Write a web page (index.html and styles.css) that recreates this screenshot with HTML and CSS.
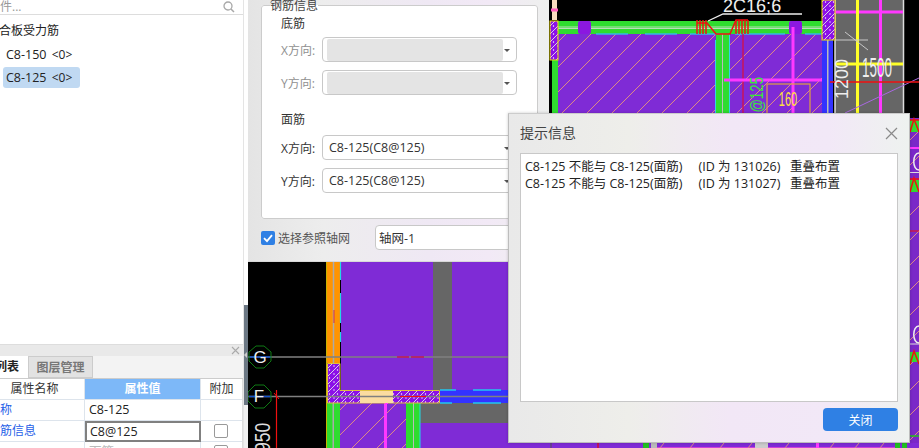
FILE: index.html
```html
<!DOCTYPE html>
<html lang="zh">
<head>
<meta charset="utf-8">
<title>钢筋布置</title>
<link rel="stylesheet" href="styles.css">
</head>
<body>
<div class="app">
  <aside class="side">
    <div class="side-top">
      <div class="search">
        <span class="search-text">件...</span>
        <svg class="search-icon" width="12" height="12" viewBox="0 0 12 12"><circle cx="5" cy="5" r="4" fill="none" stroke="#a8a8a8" stroke-width="1.3"/><path d="M8 8l3 3" stroke="#a8a8a8" stroke-width="1.5"/></svg>
      </div>
      <ul class="tree">
        <li class="tree-root">合板受力筋</li>
        <li class="tree-item">C8-150 <small>&lt;0&gt;</small></li>
        <li class="tree-item selected">C8-125 <small>&lt;0&gt;</small></li>
      </ul>
    </div>
    <div class="side-bottom">
      <div class="dock-head"><svg width="9" height="9" viewBox="0 0 9 9"><path d="M1 1l7 7M8 1l-7 7" stroke="#aaa" stroke-width="1.1"/></svg></div>
      <div class="tabs">
        <span class="tab active">列表</span>
        <span class="tab">图层管理</span>
      </div>
      <div class="grid">
        <div class="cell head first">属性名称</div>
        <div class="cell head hl">属性值</div>
        <div class="cell head">附加</div>
        <div class="cell link">称</div>
        <div class="cell val">C8-125</div>
        <div class="cell"></div>
        <div class="cell link">筋信息</div>
        <div class="cell val editing">C8@125</div>
        <div class="cell check-cell"><span class="box"></span></div>
        <div class="cell link"></div>
        <div class="cell val faded">面筋</div>
        <div class="cell check-cell"><span class="box"></span></div>
      </div>
    </div>
  </aside>
  <div class="sash"></div>
  <main class="cad">
    <svg class="drawing" width="671" height="448" viewBox="248 0 671 448" font-family="'Liberation Sans',sans-serif">
      <defs>
        <pattern id="hatch" width="25" height="25" patternUnits="userSpaceOnUse"><path d="M-3 28L28 -3" stroke="#dd8a86" stroke-width="1"/><path d="M-3 3L3 -3M22 28L28 22" stroke="#dd8a86" stroke-width="1"/></pattern>
        <pattern id="col" width="8" height="8" patternUnits="userSpaceOnUse"><rect width="8" height="8" fill="#8b0fe8"/><path d="M-1 9L9 -1" stroke="#d9d0e8" stroke-width="1"/><circle cx="1.500" cy="2" r=".7" fill="#fff"/><circle cx="6" cy="6" r=".7" fill="#fff"/></pattern>
      </defs>
      <rect x="248" width="671" height="448" fill="#000"/>

      <!-- upper plan -->
      <rect x="552" y="21" width="270" height="92" fill="#7f2bd6"/>
      <rect x="552" y="21" width="270" height="92" fill="url(#hatch)"/>
      <rect x="552" y="60" width="6" height="60" fill="#2fdc2f"/>
      <rect x="557" y="21" width="265" height="13" fill="#2fdc2f"/>
      <path d="M596 34h32M645 34h32M690 34h30M735 34h50M805 34h17" stroke="#35b8e8" stroke-width="1.5"/>
      <path d="M557 27h265M557 28.500h265" stroke="#ddd" stroke-width=".8"/>
      <rect x="578" y="21" width="13" height="13" rx="2" fill="#8b18e0"/>
      <rect x="789" y="21" width="13" height="13" rx="2" fill="#8b18e0"/>
      <rect x="716" y="34" width="6" height="79" fill="#2fdc2f"/>
      <rect x="722" y="34" width="1" height="79" fill="#bbb"/>
      <rect x="723" y="34" width="6" height="79" fill="#2fdc2f"/>
      <rect x="729" y="34" width="1" height="79" fill="#36d0e8"/>
      <rect x="715" y="40" width="1" height="73" fill="#36d0e8"/>
      <path d="M743 34v79" stroke="#c8145a" stroke-width="1.500"/>
      <path d="M793 27v86" stroke="#ff38ff" stroke-width="3"/>
      <path d="M724 80h103" stroke="#ff38ff" stroke-width="3"/>
      <rect x="767" y="84" width="43" height="32" fill="none" stroke="#e0a040" stroke-width="1.200"/>
      <text x="0" y="0" font-size="20" fill="#ffe040" text-anchor="middle" transform="translate(788 106) scale(.55 1)">160</text>
      <text x="0" y="0" font-size="19" fill="#38e838" transform="translate(763 120) rotate(-90) scale(.7 1)">8@125</text>

      <rect x="822" y="40" width="11" height="73" fill="#3333ff"/>
      <rect x="827" y="40" width="1.500" height="73" fill="#bbb"/>
      <rect x="835" width="68" height="113" fill="#666"/>
      <path d="M835 0v113M903.500 0v113" stroke="#ddd" stroke-width="1.500"/>
      <path d="M835 12h68" stroke="#ff38ff" stroke-width="3"/>
      <path d="M857.500 0v113" stroke="#ffff28" stroke-width="3"/>
      <path d="M880.500 0v113" stroke="#ff38ff" stroke-width="3"/>
      <path d="M835 64h68" stroke="#ffff28" stroke-width="3"/>
      <rect x="822" y="0" width="13" height="40" fill="url(#col)" stroke="#f0e000"/>
      <path d="M845 113L919 78" stroke="#a868e0" stroke-width="1"/>
      <path d="M845 32L868 50M835 40h33" stroke="#c8c8c8" stroke-width="1"/>
      <path d="M830 82h89" stroke="#f01010" stroke-width="1.300"/>
      <text x="0" y="0" font-size="28" fill="#eee" transform="translate(862 77) scale(.48 1)">1500</text>
      <text x="0" y="0" font-size="18" fill="#eee" transform="translate(848 99) rotate(-90)">1200</text>

      <rect x="550" y="21" width="8" height="39" fill="url(#col)" stroke="#f0e000"/>
      <rect x="552" y="0" width="5" height="20" fill="#f8dcc0"/>
      <path d="M551 10h7" stroke="#ff60c0" stroke-width="3"/>

      <path d="M697 20v14M700 20v14M703 20v14M706 20v14M736 20v14M739 20v14M742 20v14M745 20v14M748 20v14" stroke="#f01010" stroke-width="1.500"/>
      <path d="M697 23h10l9 11h14l6-14h12" fill="none" stroke="#f01010" stroke-width="1.500"/>
      <path d="M708 21L723 14H802" fill="none" stroke="#eee" stroke-width="1.300"/>
      <text x="0" y="0" font-size="19" fill="#eee" transform="translate(723 12) scale(.95 1)">2C16;6</text>

      <!-- right strip -->
      <rect x="905" y="113" width="14" height="335" fill="#7a28c8"/>
      <rect x="905" y="113" width="14" height="335" fill="url(#hatch)"/>
      <rect x="905" y="113" width="14" height="5" fill="#000"/>
      <rect x="905" y="120" width="14" height="12" fill="#2fdc2f"/>
      <path d="M910 132L914 119L919 132M905 120h14" fill="none" stroke="#f01010" stroke-width="1.500"/>
      <path d="M905 148h14" stroke="#ff38ff" stroke-width="2"/>
      <path d="M919 153C912 153 912 170 919 170" fill="none" stroke="#eee" stroke-width="1.500"/>
      <path d="M905 172.500h14" stroke="#ddd"/>
      <rect x="905" y="180" width="14" height="12" fill="#2fdc2f"/>
      <path d="M910 192L914 178L919 192M905 179h14" fill="none" stroke="#f01010" stroke-width="1.500"/>
      <path d="M905 231h14" stroke="#f01010"/>
      <path d="M919 326C912 326 912 343 919 343" fill="none" stroke="#eee" stroke-width="1.500"/>
      <path d="M905 344h14" stroke="#ddd"/>
      <rect x="905" y="352" width="14" height="10" fill="#2fdc2f"/>
      <path d="M910 364L914 351L919 364" fill="none" stroke="#f01010" stroke-width="1.500"/>
      <path d="M905 436h14" stroke="#20c020"/>

      <!-- lower plan -->
      <rect x="341" y="262" width="169" height="128" fill="#7f2bd6"/>
      <rect x="433" y="262" width="19" height="128" fill="#666"/>
      <rect x="327" y="262" width="13" height="101" fill="#ff9400"/>
      <path d="M326.500 262v186" stroke="#c8b400" stroke-width="1"/>
      <path d="M333.500 262v186" stroke="#aaa" stroke-width="1.500"/>
      <path d="M340.500 262v18M340.500 293v30M340.500 332v10" stroke="#22d8e8" stroke-width="1.200"/>
      <path d="M334 310v13" stroke="#e03030" stroke-width="1"/>
      <rect x="420" y="403" width="90" height="20" fill="#666"/>
      <rect x="420" y="423" width="90" height="25" fill="#7f2bd6"/>
      <rect x="440" y="390" width="70" height="13" fill="#3333ff"/>
      <path d="M440 390h16M473 390h28M473 403h28M440 403h12" stroke="#22c8f0" stroke-width="1.500"/>
      <rect x="340" y="403" width="66" height="45" fill="#7f2bd6"/>
      <rect x="340" y="403" width="66" height="45" fill="url(#hatch)"/>
      <rect x="384" y="403" width="3" height="45" fill="#ff38ff"/>
      <rect x="327" y="403" width="13" height="45" fill="#2fdc2f"/>
      <rect x="332.500" y="403" width="1.500" height="45" fill="#aaa"/>
      <rect x="406" y="403" width="14" height="45" fill="#2fdc2f"/>
      <rect x="413" y="403" width="1" height="45" fill="#bbb"/>
      <rect x="419.500" y="403" width="1" height="45" fill="#22d8e8"/>
      <path d="M327.500 363.500h12.500V390.500H439.500V403H327.500Z" fill="url(#col)" stroke="#e0c040"/>
      <rect x="360" y="391" width="33" height="12" fill="#fbdca0"/>
      <rect x="385" y="403" width="3" height="1" fill="#ff38ff"/>
      <path d="M248 357h262M248 396.500h262" stroke="#808080" stroke-width="1.300"/>
      <path d="M397 357h12M411 357h13" stroke="#c0145a" stroke-width="1.500"/>
      <path d="M400 396.500h22M414 396.500h12" stroke="#f01010" stroke-width="1.200"/>
      <path d="M276.500 390v58" stroke="#f01010" stroke-width="1.200"/>
      <path d="M274 393l5 6" stroke="#f01010" stroke-width="1"/>
      <path d="M249 357h22M249 396.500h22" stroke="#1050c8" stroke-width="1.300"/>
      <polygon points="256,346 264,346 271,352 271,361 264,368 256,368 249,361 249,352" fill="none" stroke="#0f7a14" stroke-width="1"/>
      <polygon points="255,385 264,385 271,392 271,401 264,408 255,408 248,401 248,392" fill="none" stroke="#0f7a14" stroke-width="1"/>
      <text x="260" y="363" font-size="17" fill="#eee" text-anchor="middle">G</text>
      <text x="259" y="402" font-size="17" fill="#eee" text-anchor="middle">F</text>
      <text x="0" y="0" font-size="22" fill="#ddd" transform="translate(270 452) rotate(-90) scale(.8 1)">950</text>

      <!-- bottom strip -->
      <rect x="510" y="443" width="409" height="5" fill="#7f2bd6"/>
      <rect x="500" y="436" width="10" height="12" fill="#7f2bd6"/>
      <rect x="643" y="443" width="6" height="5" fill="#20c020"/>
      <rect x="651" y="443" width="6" height="5" fill="#bbb"/>
      <path d="M657 447.500H895" stroke="#d040d8" stroke-width="1.200"/>
      <path d="M660 448l4-5M690 448l4-5M720 448l4-5M748 448l4-5M785 448l4-5M830 448l4-5M855 448l4-5M880 448l4-5" stroke="#dd8a86"/>
      <rect x="755" y="443" width="13" height="5" fill="#ccc"/>
      <rect x="816" y="443" width="3" height="5" fill="#ff38ff"/>
      <rect x="895" y="443" width="5" height="5" fill="#20c020"/>
      <rect x="902" y="443" width="5" height="5" fill="#20c020"/>
      <path d="M598 443v5" stroke="#c0145a" stroke-width="2"/>
      <path d="M551 443v5" stroke="#555"/>
      <path d="M908 436h11" stroke="#20c020"/>
    </svg>

    <section class="win rebar">
      <fieldset class="group">
        <legend class="legend">钢筋信息</legend>
        <h3 class="sub">底筋</h3>
        <div class="row"><label class="lbl off">X方向:</label><div class="combo"><span class="blank"></span><i class="arrow"></i></div></div>
        <div class="row"><label class="lbl off">Y方向:</label><div class="combo"><span class="blank"></span><i class="arrow"></i></div></div>
        <h3 class="sub second">面筋</h3>
        <div class="row"><label class="lbl">X方向:</label><div class="combo"><span class="value">C8-125(C8@125)</span><i class="arrow"></i></div></div>
        <div class="row"><label class="lbl">Y方向:</label><div class="combo"><span class="value">C8-125(C8@125)</span><i class="arrow"></i></div></div>
      </fieldset>
      <div class="foot">
        <label class="check"><span class="tick"><svg width="14" height="14" viewBox="0 0 14 14"><path d="M3 7.200l3 3 5-6" fill="none" stroke="#fff" stroke-width="1.800"/></svg></span>选择参照轴网</label>
        <div class="combo axis"><span class="value">轴网-1</span></div>
      </div>
    </section>

    <section class="win notice">
      <header class="notice-head">
        <h2 class="notice-title">提示信息</h2>
        <svg width="13" height="13" viewBox="0 0 13 13"><path d="M1 1l11 11M12 1L1 12" stroke="#8a8a8a" stroke-width="1.200"/></svg>
      </header>
      <div class="log">
        <p>C8-125 不能与 C8-125(面筋)&nbsp;&nbsp;&nbsp;&nbsp;&nbsp;(ID 为 131026)&nbsp;&nbsp;&nbsp;重叠布置</p>
        <p>C8-125 不能与 C8-125(面筋)&nbsp;&nbsp;&nbsp;&nbsp;&nbsp;(ID 为 131027)&nbsp;&nbsp;&nbsp;重叠布置</p>
      </div>
      <footer class="notice-foot"><button class="btn" type="button">关闭</button></footer>
    </section>
  </main>
</div>
</body>
</html>
```
FILE: styles.css
```css
* { box-sizing: border-box; }
html, body { margin: 0; padding: 0; }
body {
  width: 919px; height: 448px; overflow: hidden;
  font-family: "Open Sans", "Noto Sans CJK SC", sans-serif;
  font-size: 12.5px; color: #222;
}
.app { display: flex; width: 919px; height: 448px; }

/* left column */
.side {
  width: 244px; height: 448px; flex: none; background: #fff;
  display: flex; flex-direction: column; justify-content: space-between;
  overflow: hidden; border-right: 1px solid #e4e4e4;
}
.search {
  height: 15px; border-bottom: 1px solid #ddd;
  display: flex; justify-content: space-between; align-items: center; padding-right: 8px;
}
.search-text { color: #999; margin-top: -3px; font-size: 12px; }
.search-icon { margin-top: -1px; }
.tree { list-style: none; margin: 0; padding: 0; }
.tree-root { height: 20px; line-height: 20px; margin: 6px 0 0 -1px; font-size: 12px; }
.tree-item { height: 21px; line-height: 21px; margin: 2px 0 0 3px; width: 77px; padding-left: 3px; border-radius: 3px; }
.tree-root + .tree-item { margin-top: 3px; }
.tree-item small { font-size: 12px; margin-left: 2px; }
.selected { background: #c0d9f2; }

.dock-head {
  height: 12px; background: #e9e9e9; border-top: 1px solid #ddd;
  display: flex; justify-content: flex-end; align-items: center; padding-right: 3px;
}
.tabs { display: flex; height: 23px; background: #f3f3f3; border-bottom: 1px solid #ccc; }
.tab {
  width: 65px; line-height: 22px; text-align: center; color: #777; font-weight: 600; font-size: 12px;
  background: #e2e2e2; border: 1px solid #ccc; white-space: nowrap;
}
.tab.active {
  width: 28px; background: #fff; color: #222; border: 0;
  display: flex; justify-content: flex-end; padding-right: 9px;
}
.grid {
  display: grid; grid-template-columns: 85px 116px 42px; grid-auto-rows: 21px;
  height: 69px; overflow: hidden; border-right: 1px solid #ddd;
}
.cell {
  border-right: 1px solid #dde4ec; border-bottom: 1px solid #dde4ec;
  display: flex; align-items: center; justify-content: center; white-space: nowrap; line-height: 20px;
}
.head { color: #333; font-size: 12px; }
.head.first { padding-right: 15px; }
.head.hl { background: #7db8f8; color: #fff; font-weight: 600; }
.link { color: #1f5fe8; justify-content: flex-start; font-size: 12px; }
.val { justify-content: flex-start; padding-left: 4px; }
.editing { border: 2px solid #808080; padding-left: 3px; }
.faded { color: #bbb; }
.check-cell { padding-right: 2px; }
.box { width: 14px; height: 14px; border: 1px solid #999; border-radius: 2px; background: #fff; }

.sash {
  position: relative; width: 4px; height: 448px; flex: none;
  background: linear-gradient(#fff 305px, #6c7884 305px, #6c7884 405px, #f0f0f0 405px);
}
.sash::after {
  content: ""; position: absolute; left: 0; top: 352px; width: 0; height: 0;
  border: 3px solid transparent; border-left: 0; border-right: 3px solid #ccc;
}

/* drawing and floating windows */
.cad { position: relative; flex: 1; height: 448px; overflow: hidden; background: #000; }
.drawing { position: absolute; left: 0; top: 0; display: block; }
.win { position: absolute; }

.rebar {
  left: 0; top: -8px; width: 301px; height: 270px; padding: 13px 11px 0 13px;
  background: linear-gradient(90deg, #e4e4e4 0, #ededed 25%, #efe8f4 60%, #f2e9f6 80%, #eef0ee 100%);
  border-bottom: 1px solid #d8d8d8;
}
.group {
  margin: 0; padding: 0 0 0 19px; height: 214px; width: 277px;
  background: #fff; border: 1px solid #ccc; border-radius: 3px;
  min-inline-size: 0; font-size: 12px;
}
.legend { padding: 0; margin-left: -11px; font-size: 12px; height: 0; line-height: 0; color: #444; }
.sub { margin: 8px 0 0; font-size: 12px; font-weight: 400; line-height: 20px; height: 20px; color: #333; }
.sub.second { margin-top: 15px; }
.row { display: flex; align-items: center; height: 25px; margin-top: 8px; }
.sub + .row { margin-top: 3px; }
.sub.second + .row { margin-top: 5px; }
.lbl { width: 41px; flex: none; color: #333; white-space: nowrap; }
.lbl.off { color: #909090; }
.combo {
  position: relative; flex: none; width: 195px; height: 25px; border: 1px solid #c8c8c8; border-radius: 4px; background: #fff;
  display: flex; align-items: center;
}
.blank { width: 176px; height: 22px; margin-left: 4px; background: #e4e4e4; border-radius: 2px; }
.value { padding-left: 6px; color: #333; white-space: nowrap; font-size: 12.5px; }
.arrow {
  position: absolute; right: 6px; top: 11px; width: 0; height: 0;
  border: 3px solid transparent; border-top: 3px solid #555; border-bottom: 0;
}
.foot { display: flex; align-items: center; height: 25px; margin-top: 6px; }
.check { display: flex; align-items: center; flex: none; width: 114px; color: #555; white-space: nowrap; font-size: 12px; }
.tick { width: 14px; height: 14px; background: #2f80e4; border-radius: 2px; margin-right: 3px; display: flex; }
.axis { width: 200px; }
.axis .value { padding-left: 3px; }

.notice {
  left: 260px; top: 113px; width: 402px; height: 330px; padding: 0 11px 0 11px;
  background: linear-gradient(90deg, #e9e9e9 0, #eeeeea 30%, #f2e7f6 55%, #f2e8f7 80%, #eef2ef 100%);
  border: 1px solid #bdbdbd; border-top-color: #ccc;
  box-shadow: 0 0 3px rgba(0,0,0,.2);
  display: flex; flex-direction: column;
}
.notice-head { display: flex; justify-content: space-between; align-items: center; height: 39px; }
.notice-title { margin: -3px 0 0; font-size: 14px; font-weight: 400; color: #444; }
.log { height: 249px; background: #fff; border: 1px solid #c8c8c8; padding: 4px 4px; flex: none; }
.log p { margin: 0; line-height: 17px; color: #222; white-space: nowrap; }
.notice-foot { display: flex; justify-content: flex-end; padding-top: 6px; }
.btn {
  width: 75px; height: 23px; border: 0; border-radius: 4px; background: #2f80e4; color: #fff;
  font: inherit; font-size: 12px; padding: 0;
}
```
